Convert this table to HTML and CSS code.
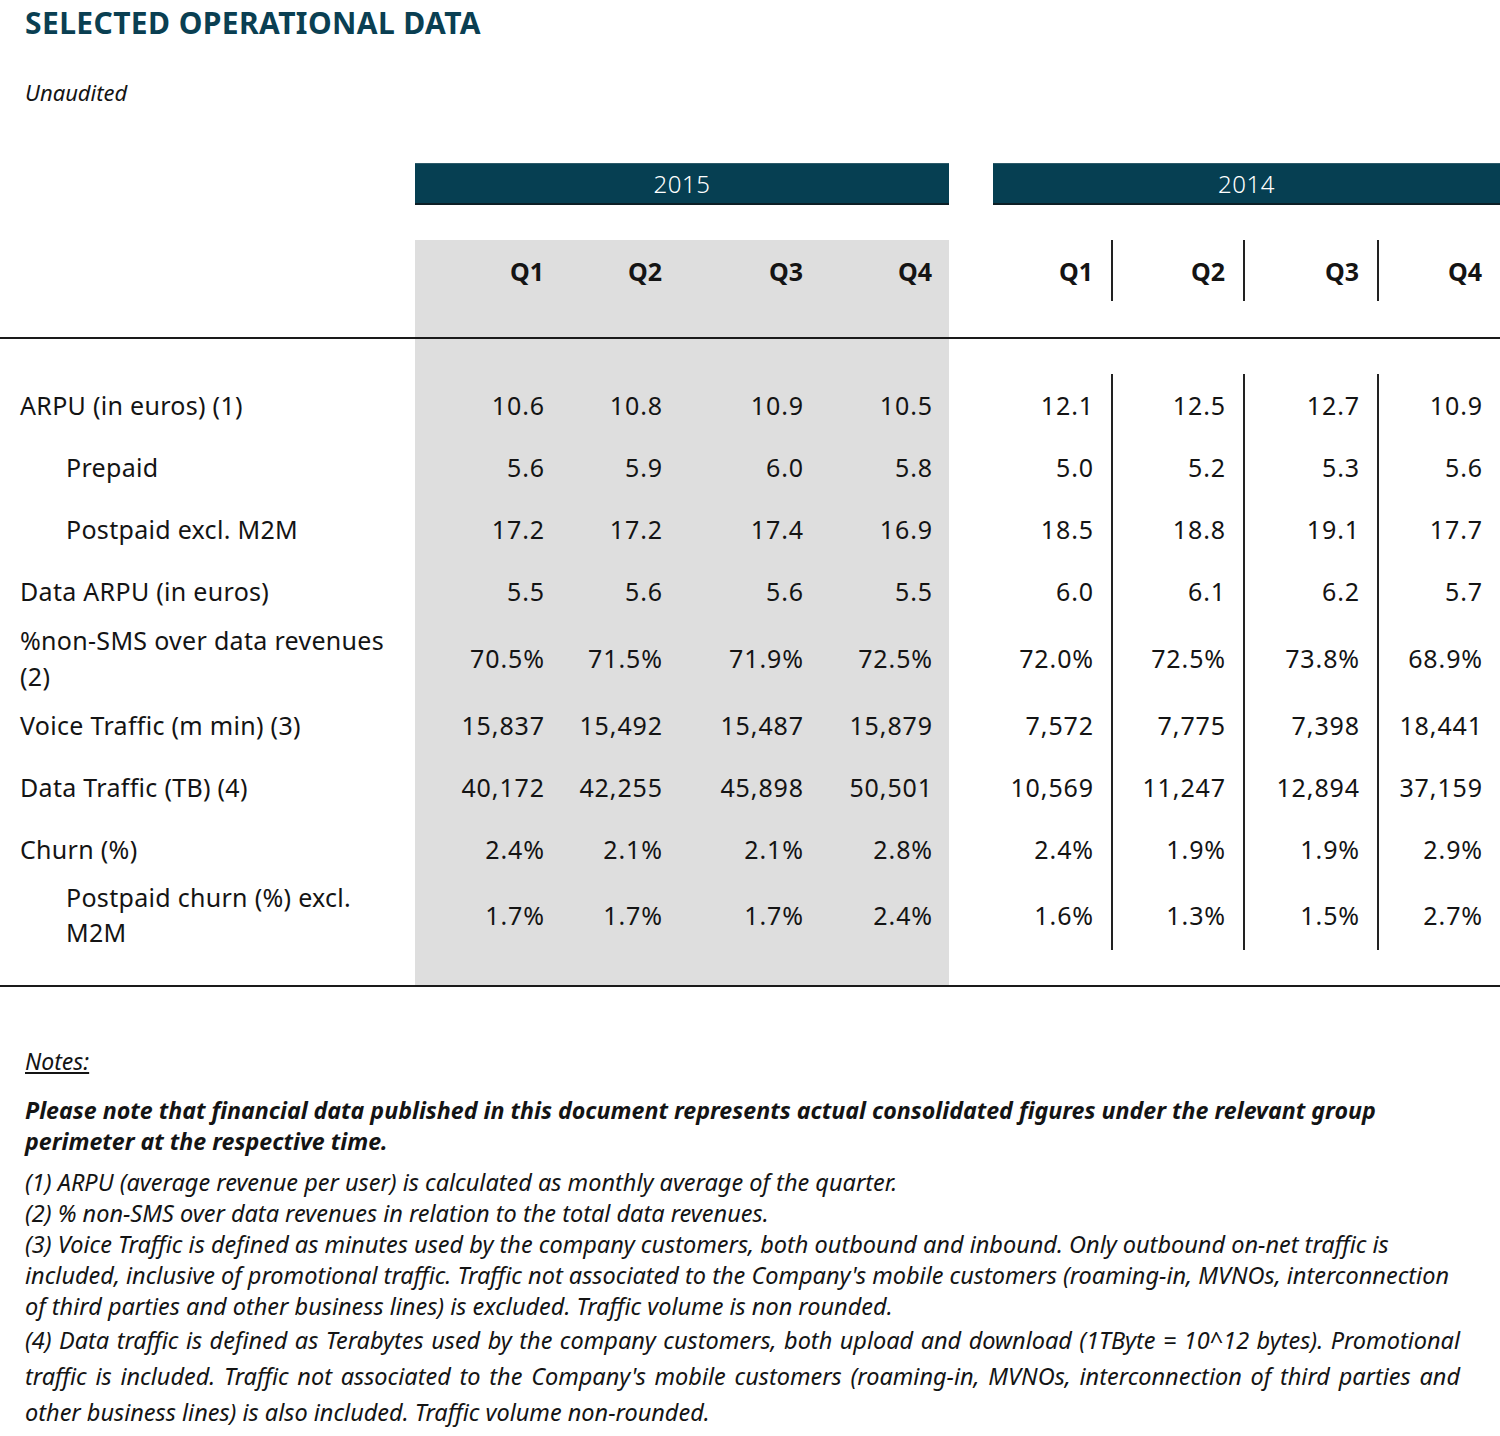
FILE: index.html
```html
<!DOCTYPE html>
<html>
<head>
<meta charset="utf-8">
<link rel="stylesheet" href="styles.css">
</head>
<body>
<h1 class="title">SELECTED OPERATIONAL DATA</h1>
<p class="sub">Unaudited</p>

<table class="ops">
  <colgroup>
    <col class="c-label">
    <col class="c-a1"><col class="c-a2"><col class="c-a3"><col class="c-a4">
    <col class="c-gap">
    <col class="c-b1"><col class="c-b2"><col class="c-b3"><col class="c-b4">
  </colgroup>
  <tr class="year-row">
    <td></td>
    <td colspan="4" class="year">2015</td>
    <td></td>
    <td colspan="4" class="year">2014</td>
  </tr>
  <tr class="sp-36"><td colspan="10"></td></tr>
  <tr class="q-row">
    <td></td>
    <td class="g">Q1</td><td class="g">Q2</td><td class="g">Q3</td><td class="g">Q4</td>
    <td></td>
    <td>Q1</td><td class="dv">Q2</td><td class="dv">Q3</td><td class="dv">Q4</td>
  </tr>
  <tr class="sp-line">
    <td></td><td class="g"></td><td class="g"></td><td class="g"></td><td class="g"></td><td></td><td></td><td></td><td></td><td></td>
  </tr>
  <tr class="sp-gap">
    <td></td><td class="g"></td><td class="g"></td><td class="g"></td><td class="g"></td><td></td><td></td><td></td><td></td><td></td>
  </tr>
  <tr class="r">
    <th>ARPU (in euros) (1)</th>
    <td class="g">10.6</td><td class="g">10.8</td><td class="g">10.9</td><td class="g">10.5</td><td></td>
    <td>12.1</td><td class="dv">12.5</td><td class="dv">12.7</td><td class="dv">10.9</td>
  </tr>
  <tr class="r">
    <th class="ind">Prepaid</th>
    <td class="g">5.6</td><td class="g">5.9</td><td class="g">6.0</td><td class="g">5.8</td><td></td>
    <td>5.0</td><td class="dv">5.2</td><td class="dv">5.3</td><td class="dv">5.6</td>
  </tr>
  <tr class="r">
    <th class="ind">Postpaid excl. M2M</th>
    <td class="g">17.2</td><td class="g">17.2</td><td class="g">17.4</td><td class="g">16.9</td><td></td>
    <td>18.5</td><td class="dv">18.8</td><td class="dv">19.1</td><td class="dv">17.7</td>
  </tr>
  <tr class="r">
    <th>Data ARPU (in euros)</th>
    <td class="g">5.5</td><td class="g">5.6</td><td class="g">5.6</td><td class="g">5.5</td><td></td>
    <td>6.0</td><td class="dv">6.1</td><td class="dv">6.2</td><td class="dv">5.7</td>
  </tr>
  <tr class="r r-72">
    <th>%non-SMS over data revenues (2)</th>
    <td class="g">70.5%</td><td class="g">71.5%</td><td class="g">71.9%</td><td class="g">72.5%</td><td></td>
    <td>72.0%</td><td class="dv">72.5%</td><td class="dv">73.8%</td><td class="dv">68.9%</td>
  </tr>
  <tr class="r">
    <th>Voice Traffic (m min) (3)</th>
    <td class="g">15,837</td><td class="g">15,492</td><td class="g">15,487</td><td class="g">15,879</td><td></td>
    <td>7,572</td><td class="dv">7,775</td><td class="dv">7,398</td><td class="dv">18,441</td>
  </tr>
  <tr class="r">
    <th>Data Traffic (TB) (4)</th>
    <td class="g">40,172</td><td class="g">42,255</td><td class="g">45,898</td><td class="g">50,501</td><td></td>
    <td>10,569</td><td class="dv">11,247</td><td class="dv">12,894</td><td class="dv">37,159</td>
  </tr>
  <tr class="r">
    <th>Churn (%)</th>
    <td class="g">2.4%</td><td class="g">2.1%</td><td class="g">2.1%</td><td class="g">2.8%</td><td></td>
    <td>2.4%</td><td class="dv">1.9%</td><td class="dv">1.9%</td><td class="dv">2.9%</td>
  </tr>
  <tr class="r r-70">
    <th class="ind">Postpaid churn (%) excl. M2M</th>
    <td class="g">1.7%</td><td class="g">1.7%</td><td class="g">1.7%</td><td class="g">2.4%</td><td></td>
    <td>1.6%</td><td class="dv">1.3%</td><td class="dv">1.5%</td><td class="dv">2.7%</td>
  </tr>
  <tr class="sp-end">
    <td></td><td class="g"></td><td class="g"></td><td class="g"></td><td class="g"></td><td></td><td></td><td></td><td></td><td></td>
  </tr>
</table>

<section class="notes">
  <p class="notes-head">Notes:</p>
  <p class="notes-lead">Please note that financial data published in this document represents actual consolidated figures under the relevant group perimeter at the respective time.</p>
  <p class="note">(1) ARPU (average revenue per user) is calculated as monthly average of the quarter.</p>
  <p class="note">(2) % non-SMS over data revenues in relation to the total data revenues.</p>
  <p class="note">(3) Voice Traffic is defined as minutes used by the company customers, both outbound and inbound. Only outbound on-net traffic is included, inclusive of promotional traffic. Traffic not associated to the Company's mobile customers (roaming-in, MVNOs, interconnection of third parties and other business lines) is excluded. Traffic volume is non rounded.</p>
  <p class="note note-just">(4) Data traffic is defined as Terabytes used by the company customers, both upload and download (1TByte = 10^12 bytes). Promotional traffic is included. Traffic not associated to the Company's mobile customers (roaming-in, MVNOs, interconnection of third parties and other business lines) is also included. Traffic volume non-rounded.</p>
</section>
</body>
</html>
```

FILE: styles.css
```css
html, body {
  margin: 0;
  padding: 0;
  background: #ffffff;
}
body {
  width: 1500px;
  font-family: "Noto Sans", "Liberation Sans", sans-serif;
  color: #141414;
}
.title {
  margin: 0;
  padding: 3px 0 0 25px;
  height: 37px;
  line-height: 40px;
  font-size: 30px;
  font-weight: 700;
  color: #0a3f52;
  letter-spacing: 0.4px;
}
.sub {
  margin: 0;
  padding: 36px 0 0 25px;
  height: 87px;
  line-height: 32px;
  font-size: 22px;
  font-style: italic;
}
.ops {
  border-collapse: separate;
  border-spacing: 0;
  table-layout: fixed;
  width: 1500px;
  font-size: 25px;
}
.c-label { width: 415px; }
.c-a1 { width: 146px; }
.c-a2 { width: 118px; }
.c-a3 { width: 141px; }
.c-a4 { width: 129px; }
.c-gap { width: 44px; }
.c-b1 { width: 118px; }
.c-b2 { width: 132px; }
.c-b3 { width: 134px; }
.c-b4 { width: 123px; }
.ops td, .ops th {
  padding: 0;
  text-align: right;
  vertical-align: middle;
}
.year-row td { height: 39px; }
.ops td.year {
  background: #063f52;
  color: #ffffff;
  text-align: center;
  font-weight: 300;
  font-size: 24px;
  border-top: 1px solid #2c5a69;
  border-bottom: 2px solid #0d1f26;
  letter-spacing: 0.5px;
  padding: 0;
}
.sp-36 td { height: 35px; }
.g { background: #dedede; }
.ops td.dv { border-left: 2px solid #222; }
.q-row td {
  height: 61px;
  font-weight: 700;
  padding-right: 18px;
}
.q-row td.g { padding-right: 17px; }
.sp-line td { height: 36px; border-bottom: 2px solid #1a1a1a; }
.sp-gap td { height: 35px; }
.r th, .r td { height: 62px; line-height: 36px; }
.r td {
  padding-right: 17px;
  letter-spacing: 0.9px;
}
.r td.g { padding-right: 16px; }
.r th {
  text-align: left;
  font-weight: 400;
  padding-left: 20px;
  padding-right: 16px;
  letter-spacing: 0.3px;
}
.r th.ind { padding-left: 66px; }
.r-72 th, .r-72 td { height: 72px; }
.r-70 th, .r-70 td { height: 70px; line-height: 35px; }
.sp-end td { height: 35px; border-bottom: 2px solid #1a1a1a; }

.notes {
  padding: 60px 40px 0 25px;
}
.notes p { margin: 0; }
.notes-head {
  font-size: 23px;
  font-style: italic;
  text-decoration: underline;
  line-height: 28px;
}
.notes-lead {
  margin-top: 20px !important;
  font-size: 23.2px;
  font-style: italic;
  font-weight: 700;
  line-height: 31px;
}
.note {
  font-size: 23.5px;
  font-style: italic;
  line-height: 31px;
}
.notes-lead + .note { margin-top: 10px; }
.note-just {
  text-align: justify;
  line-height: 36px;
}
```
